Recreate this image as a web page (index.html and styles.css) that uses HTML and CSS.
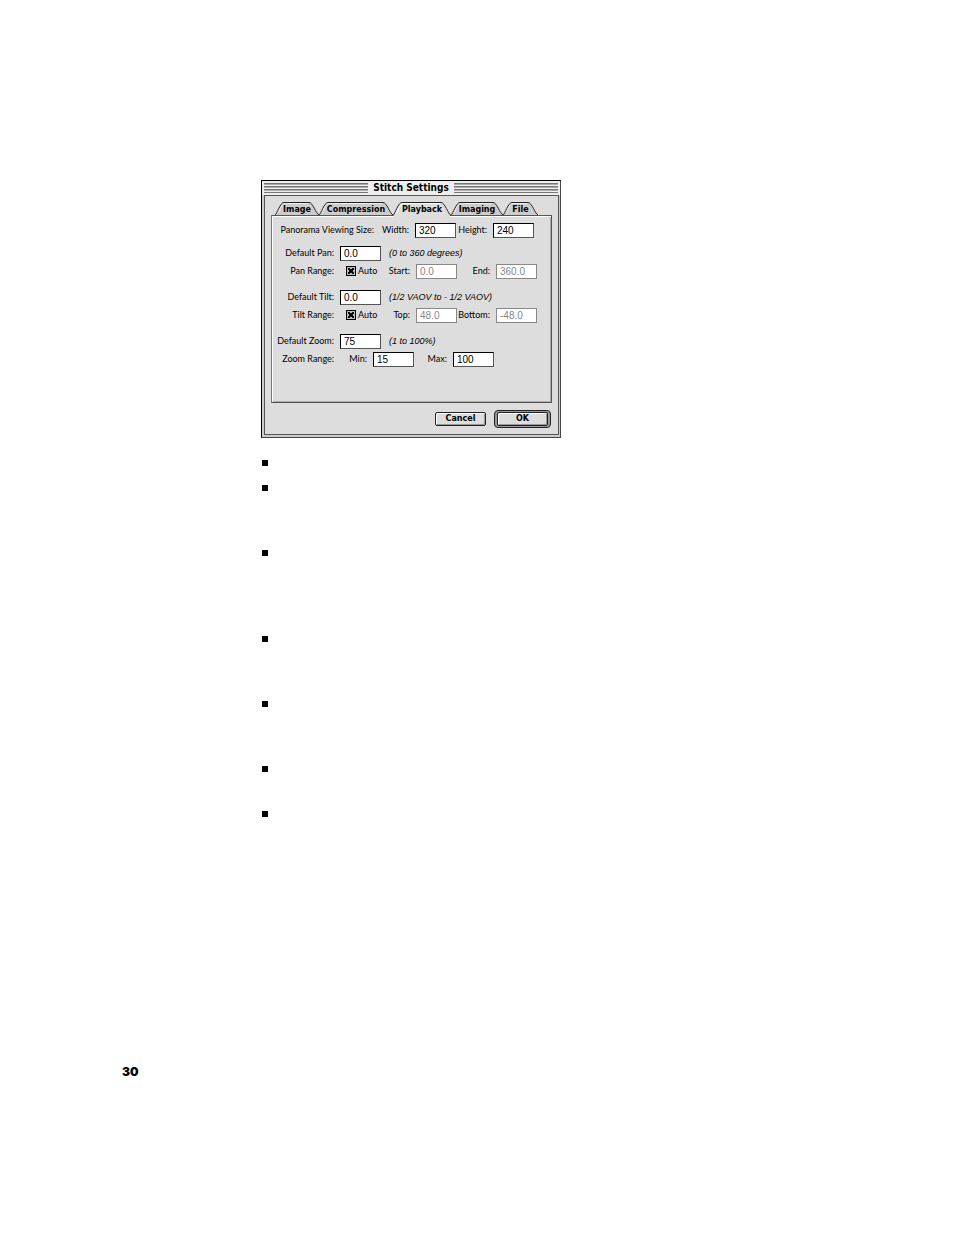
FILE: index.html
```html
<!DOCTYPE html>
<html lang="en">
<head>
<meta charset="utf-8">
<title>Stitch Settings</title>
<link rel="stylesheet" href="styles.css">
</head>
<body>
<main class="page">
  <section class="dialog" aria-labelledby="dialog-title">
    <header class="titlebar">
      <span class="stripes"></span>
      <h1 class="title" id="dialog-title">Stitch Settings</h1>
      <span class="stripes"></span>
    </header>
    <form class="body">
      <nav class="tabs">
        <button type="button" class="tab tab-image"><svg class="shape" viewBox="0 0 44 13"><path class="face" d="M0 13C2 12 5 .5 9 .5H34C38 .5 41 12 44 13"/><path class="shine" d="M3 11C5 7 7 2 10 1.5H33"/></svg><span>Image</span></button>
        <button type="button" class="tab tab-compression"><svg class="shape" viewBox="0 0 74 13"><path class="face" d="M0 13C2 12 5 .5 9 .5H64C68 .5 71 12 74 13"/><path class="shine" d="M3 11C5 7 7 2 10 1.5H63"/></svg><span>Compression</span></button>
        <button type="button" class="tab tab-playback active"><svg class="shape" viewBox="0 0 58 13"><path class="base" d="M1 12.5H57V15H1Z"/><path class="face" d="M0 13.5C2 12 5 .5 9 .5H48C52 .5 55 12 58 13.5"/><path class="shine" d="M2 13C5 8 7 2 10 1.5H47"/></svg><span>Playback</span></button>
        <button type="button" class="tab tab-imaging"><svg class="shape" viewBox="0 0 52 13"><path class="face" d="M0 13C2 12 5 .5 9 .5H42C46 .5 49 12 52 13"/><path class="shine" d="M3 11C5 7 7 2 10 1.5H41"/></svg><span>Imaging</span></button>
        <button type="button" class="tab tab-file"><svg class="shape" viewBox="0 0 35 13"><path class="face" d="M0 13C2 12 5 .5 9 .5H25C29 .5 32 12 35 13"/><path class="shine" d="M3 11C5 7 7 2 10 1.5H24"/></svg><span>File</span></button>
      </nav>
      <div class="panel">
        <div class="group first">
          <div class="row">
            <span class="wide">Panorama Viewing Size:</span>
            <label class="mid" for="width">Width:</label><input class="field" id="width" value="320">
            <label class="mid" for="height">Height:</label><input class="field" id="height" value="240">
          </div>
        </div>
        <div class="group">
          <div class="row">
            <label class="name" for="pan">Default Pan:</label><input class="field" id="pan" value="0.0">
            <em class="hint">(0 to 360 degrees)</em>
          </div>
          <div class="row">
            <span class="name">Pan Range:</span>
            <input type="checkbox" class="check" id="pan-auto" checked><label class="auto" for="pan-auto">Auto</label>
            <label class="start" for="pan-start">Start:</label><input class="field" id="pan-start" value="0.0" disabled>
            <label class="end" for="pan-end">End:</label><input class="field" id="pan-end" value="360.0" disabled>
          </div>
        </div>
        <div class="group">
          <div class="row">
            <label class="name" for="tilt">Default Tilt:</label><input class="field" id="tilt" value="0.0">
            <em class="hint">(1/2 VAOV to - 1/2 VAOV)</em>
          </div>
          <div class="row">
            <span class="name">Tilt Range:</span>
            <input type="checkbox" class="check" id="tilt-auto" checked><label class="auto" for="tilt-auto">Auto</label>
            <label class="start" for="tilt-top">Top:</label><input class="field" id="tilt-top" value="48.0" disabled>
            <label class="end" for="tilt-bottom">Bottom:</label><input class="field" id="tilt-bottom" value="-48.0" disabled>
          </div>
        </div>
        <div class="group">
          <div class="row">
            <label class="name" for="zoom">Default Zoom:</label><input class="field" id="zoom" value="75">
            <em class="hint">(1 to 100%)</em>
          </div>
          <div class="row">
            <span class="name">Zoom Range:</span>
            <label class="min" for="zoom-min">Min:</label><input class="field" id="zoom-min" value="15">
            <label class="max" for="zoom-max">Max:</label><input class="field" id="zoom-max" value="100">
          </div>
        </div>
      </div>
      <footer class="actions">
        <button type="button" class="push">Cancel</button>
        <span class="default-ring"><button type="button" class="push">OK</button></span>
      </footer>
    </form>
  </section>
  <ul class="bullets">
    <li class="one-line"></li>
    <li class="three-lines"></li>
    <li class="four-lines"></li>
    <li class="three-lines"></li>
    <li class="three-lines"></li>
    <li class="two-lines"></li>
    <li class="one-line"></li>
  </ul>
  <p class="folio">30</p>
</main>
</body>
</html>
```
FILE: styles.css
```css
* { box-sizing: border-box; }

body {
  margin: 0;
  background: #fff;
  color: #000;
  font-family: "Liberation Sans", Arial, sans-serif;
}

.page { padding: 180px 122px 40px 261px; }

.dialog {
  width: 300px;
  border: 1px solid #000;
  border-right-color: #444;
  border-bottom-color: #444;
  background: #ccc;
  font: 9px/12px Lato, "Liberation Sans", sans-serif;
}

.titlebar {
  display: flex;
  align-items: center;
  height: 14px;
  padding: 0 2px;
  background: #eee;
}

.stripes {
  flex: 1;
  height: 10px;
  background: repeating-linear-gradient(#777 0 1px, #aaa 1px 2px, #eee 2px 3px);
}

.title {
  margin: 0;
  padding: 0 5px;
  font: bold 10px/14px "DejaVu Sans Condensed", "DejaVu Sans", sans-serif;
}

.body {
  margin: 0 1px 2px 2px;
  padding: 6px;
  border: 1px solid #555;
  background: #ddd;
}

.tabs {
  position: relative;
  z-index: 1;
  display: flex;
  padding-left: 4px;
}

.tab {
  position: relative;
  height: 13px;
  padding: 2px 0 0;
  border: 0;
  background: none;
  font: bold 8px/11px "DejaVu Sans", sans-serif;
  color: #000;
  white-space: nowrap;
}

.tab span { position: relative; }
.tab-image { width: 44px; }
.tab-compression { width: 74px; }
.tab-playback { width: 58px; }
.tab-imaging { width: 52px; }
.tab-file { width: 35px; }

.shape {
  position: absolute;
  inset: 0;
  width: 100%;
  height: 13px;
  overflow: visible;
}

.face { fill: #ccc; stroke: #222; }
.shine { fill: none; stroke: #eee; }
.base { fill: #ddd; }
.active .face { fill: #ddd; }
.active .shine { stroke: #fff; }

.panel {
  min-height: 188px;
  padding: 5px 6px 0 0;
  border: 1px solid #555;
  border-left-color: #777;
  box-shadow: inset 1px 1px #fff, inset -1px -1px #aaa;
}

.group { margin-bottom: 8px; }
.group.first { margin-bottom: 5px; }

.row {
  display: flex;
  align-items: center;
  height: 18px;
  white-space: nowrap;
}

.wide { width: 102px; text-align: right; }
.mid { width: 41px; padding-right: 6px; text-align: right; }
.mid + .field + .mid { width: 37px; }
.name { width: 68px; padding-right: 6px; text-align: right; }
.auto { width: 20px; margin-left: 2px; }
.start { width: 38px; padding-right: 6px; text-align: right; }
.end { width: 39px; padding-right: 6px; text-align: right; }
.min { width: 33px; padding-right: 6px; text-align: right; }
.max { width: 39px; padding-right: 6px; text-align: right; }

.hint {
  margin-left: 8px;
  font-family: "Liberation Sans", Arial, sans-serif;
}

.field {
  width: 41px;
  height: 15px;
  padding: 0 3px;
  border: 1px solid #000;
  border-right-color: #555;
  border-bottom-color: #555;
  border-radius: 0;
  background: #fff;
  color: #000;
  font: 10px/12px "Liberation Sans", Arial, sans-serif;
}

.field:disabled {
  border-color: #888;
  color: #888;
}

.check {
  appearance: none;
  width: 10px;
  height: 10px;
  margin: 0 0 0 6px;
  border: 1px solid #000;
  background: #bbb;
}

.check:checked {
  background:
    linear-gradient(45deg, transparent 38%, #000 42% 58%, transparent 62%) center / 6px 6px no-repeat,
    linear-gradient(135deg, transparent 38%, #000 42% 58%, transparent 62%) center / 6px 6px no-repeat,
    #bbb;
}

.actions {
  display: flex;
  justify-content: flex-end;
  align-items: center;
  gap: 8px;
  margin-top: 7px;
  padding-right: 1px;
}

.push {
  width: 51px;
  height: 14px;
  padding: 0;
  border: 1px solid #222;
  border-radius: 2px;
  background: #ddd;
  box-shadow: inset 1px 1px #fff, inset -1px -1px #999;
  color: #000;
  font: bold 8px/12px "DejaVu Sans", sans-serif;
}

.default-ring {
  display: flex;
  padding: 1px 2px;
  border: 1px solid #222;
  border-radius: 4px;
  background: #999;
}

.bullets {
  margin: 22px 0 0;
  padding: 0 0 0 1px;
  list-style: none;
}

.bullets li::before {
  content: "";
  display: block;
  width: 6px;
  height: 6px;
  background: #000;
}

.one-line { height: 25px; }
.two-lines { height: 45px; }
.three-lines { height: 65px; }
.four-lines { height: 86px; }

.folio {
  margin: 229px 0 0 -139px;
  font: 900 12px/14px Inter, "DejaVu Sans", sans-serif;
}
```
